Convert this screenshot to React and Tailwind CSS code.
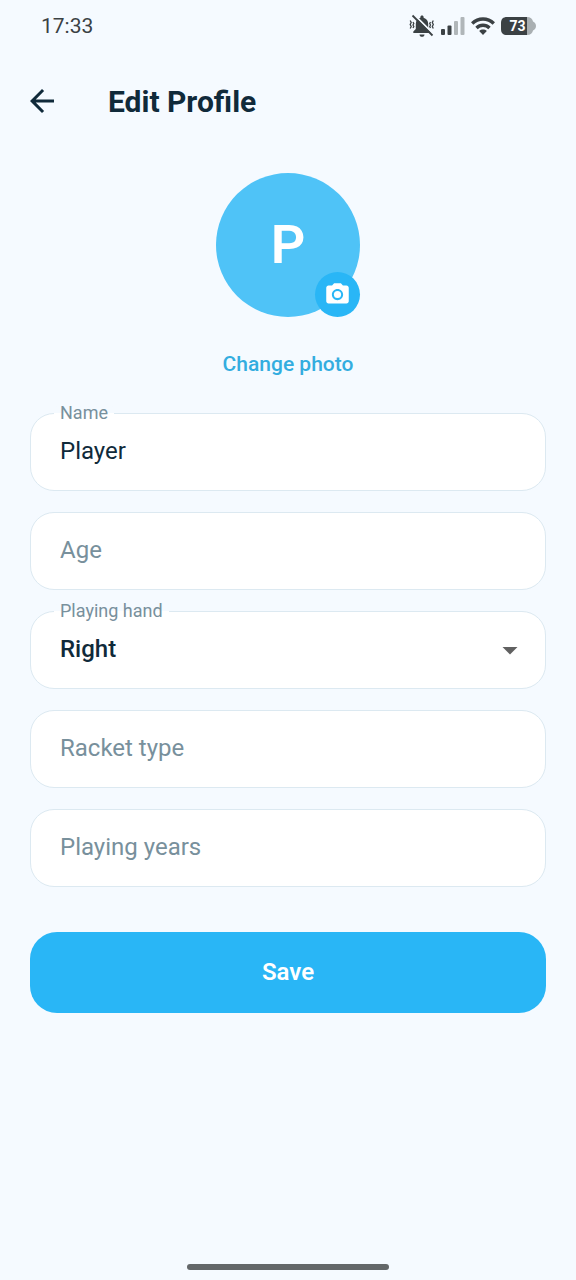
import { useState } from 'react';
import { MdArrowBack, MdArrowDropDown, MdCameraAlt } from 'react-icons/md';

function StatusBar() {
    return (
        <div className="flex items-center justify-between h-[52px] pl-[41px] pr-10 text-[#3b4144]">
            <span className="text-[21px] leading-6">17:33</span>
            <div className="flex items-center gap-1.5">
                {/* Silent */}
                <svg width="26" height="24" viewBox="0 0 26 24" fill="currentColor">
                    <path d="M13 1.5c1 0 1.600.7 1.600 1.600v.6c2.900.8 4.600 3.200 4.600 6.200v5l2.500 2.600v1.500H4.300v-1.500l2.500-2.600v-5c0-3 1.700-5.400 4.600-6.200v-.6c0-.9.6-1.600 1.600-1.600z" />
                    <path d="M10.500 20.500h5c0 1.400-1.100 2.300-2.500 2.300s-2.500-.9-2.500-2.300z" />
                    <path d="M5 0.500L24.500 20" stroke="#f5faff" strokeWidth="1.800" />
                    <path d="M3.500 1.500l20 20" stroke="currentColor" strokeWidth="1.800" />
                    <path
                        d="M1.200 6.500l1 2-1 2 1 2-1 2M4 8l.8 1.500L4 11l.8 1.500L4 14M24.300 6.500l-1 2 1 2-1 2 1 2M21.500 8l-.8 1.500.8 1.500-.8 1.500.8 1.500"
                        fill="none"
                        stroke="currentColor"
                        strokeWidth="1.300"
                    />
                </svg>
                {/* Signal */}
                <svg width="24" height="18" viewBox="0 0 24 18" fill="currentColor">
                    <rect x="0" y="12" width="4" height="6" rx="1" />
                    <rect x="6.500" y="8.500" width="4" height="9.500" rx="1" />
                    <rect x="13" y="4" width="4" height="14" rx="1" fill="#b0b6b9" />
                    <rect x="19.500" y="0" width="4" height="18" rx="1" fill="#b0b6b9" />
                </svg>
                {/* Wi-Fi */}
                <svg width="24" height="18" viewBox="0 0 24 18" fill="none" stroke="currentColor" strokeWidth="3.400">
                    <path d="M1.200 6.500C7.400.400 16.600.400 22.800 6.500" />
                    <path d="M5.500 11c3.700-3.600 9.300-3.600 13 0" />
                    <path d="M12 18l-3.800-4c2.100-1.900 5.500-1.900 7.600 0z" fill="currentColor" stroke="none" />
                </svg>
                {/* Battery */}
                <div className="relative">
                    <svg width="35" height="18" viewBox="0 0 35 18">
                        <path d="M25 0h1c3.500 0 5.500 2 6 4.500 1.800.6 3 2.300 3 4.500s-1.200 3.900-3 4.500c-.5 2.500-2.500 4.500-6 4.500h-1z" fill="#a9afb2" />
                        <path d="M6 0h20v18H6c-4 0-6-2-6-6V6c0-4 2-6 6-6z" fill="currentColor" />
                    </svg>
                    <span className="absolute inset-0 pr-0.5 text-center text-sm leading-[18px] font-bold text-white">73</span>
                </div>
            </div>
        </div>
    );
}

function FloatingLabel({ htmlFor, children }) {
    return (
        <label
            htmlFor={htmlFor}
            className="absolute -top-3 left-6 px-1.5 text-lg leading-6 text-[#78909c] bg-linear-to-b from-[#f5faff] from-50% to-white to-50%"
        >
            {children}
        </label>
    );
}

function TextField({ id, label, value, onChange }) {
    return (
        <div className="relative">
            {value && <FloatingLabel htmlFor={id}>{label}</FloatingLabel>}
            <input
                id={id}
                type="text"
                aria-label={label}
                placeholder={label}
                value={value}
                onChange={(e) => onChange(id, e.target.value)}
                className="block w-full h-[78px] rounded-3xl border border-[#dce9f1] bg-white px-[29px] pb-0.5 text-2xl text-[#102a3a] placeholder-[#78909c] focus:outline-none focus:border-[#29b6f6]"
            />
        </div>
    );
}

export default function App() {
    const [form, setForm] = useState({
        name: 'Player',
        age: '',
        hand: 'Right',
        racket: '',
        years: '',
    });

    function handleChange(field, value) {
        setForm({ ...form, [field]: value });
    }

    return (
        <div className="flex flex-col min-h-screen bg-[#f5faff] font-['Roboto',sans-serif]">
            <StatusBar />

            <header className="flex items-center gap-12 h-[98px] px-6">
                <button type="button" aria-label="Back" className="text-[#102a3a]">
                    <MdArrowBack size={36} />
                </button>
                <h1 className="pt-0.5 text-3xl leading-9 font-bold text-[#102a3a]">Edit Profile</h1>
            </header>

            <main className="flex flex-col px-[30px] pt-[23px]">
                {/* Avatar */}
                <div className="relative self-center flex items-center justify-center size-36 rounded-full bg-[#4fc3f7] text-white">
                    <span className="text-[54px] leading-[60px] font-semibold">P</span>
                    <button
                        type="button"
                        aria-label="Take photo"
                        className="absolute right-0 bottom-0 flex items-center justify-center size-[45px] rounded-full bg-[#29b6f6]"
                    >
                        <MdCameraAlt size={27} />
                    </button>
                </div>
                <button type="button" className="self-center mt-6 h-12 px-4 text-[21px] font-medium text-[#33addf]">
                    Change photo
                </button>

                <form className="flex flex-col gap-[21px] mt-6" onSubmit={(e) => e.preventDefault()}>
                    <TextField id="name" label="Name" value={form.name} onChange={handleChange} />
                    <TextField id="age" label="Age" value={form.age} onChange={handleChange} />

                    <div className="relative">
                        <FloatingLabel htmlFor="hand">Playing hand</FloatingLabel>
                        <select
                            id="hand"
                            value={form.hand}
                            onChange={(e) => handleChange('hand', e.target.value)}
                            className="block w-full h-[78px] appearance-none rounded-3xl border border-[#dce9f1] bg-white px-[29px] pb-0.5 text-2xl font-medium text-[#102a3a] focus:outline-none focus:border-[#29b6f6]"
                        >
                            <option>Right</option>
                            <option>Left</option>
                        </select>
                        <MdArrowDropDown size={36} className="absolute right-[18px] top-[21px] text-[#616161] pointer-events-none" />
                    </div>

                    <TextField id="racket" label="Racket type" value={form.racket} onChange={handleChange} />
                    <TextField id="years" label="Playing years" value={form.years} onChange={handleChange} />

                    <button type="submit" className="mt-6 h-[81px] rounded-[27px] bg-[#29b6f6] pb-0.5 text-2xl font-semibold text-white">
                        Save
                    </button>
                </form>
            </main>

            {/* Home indicator */}
            <div className="mt-auto mb-2.5 self-center w-[202px] h-1.5 rounded-full bg-[#636769]" />
        </div>
    );
}
